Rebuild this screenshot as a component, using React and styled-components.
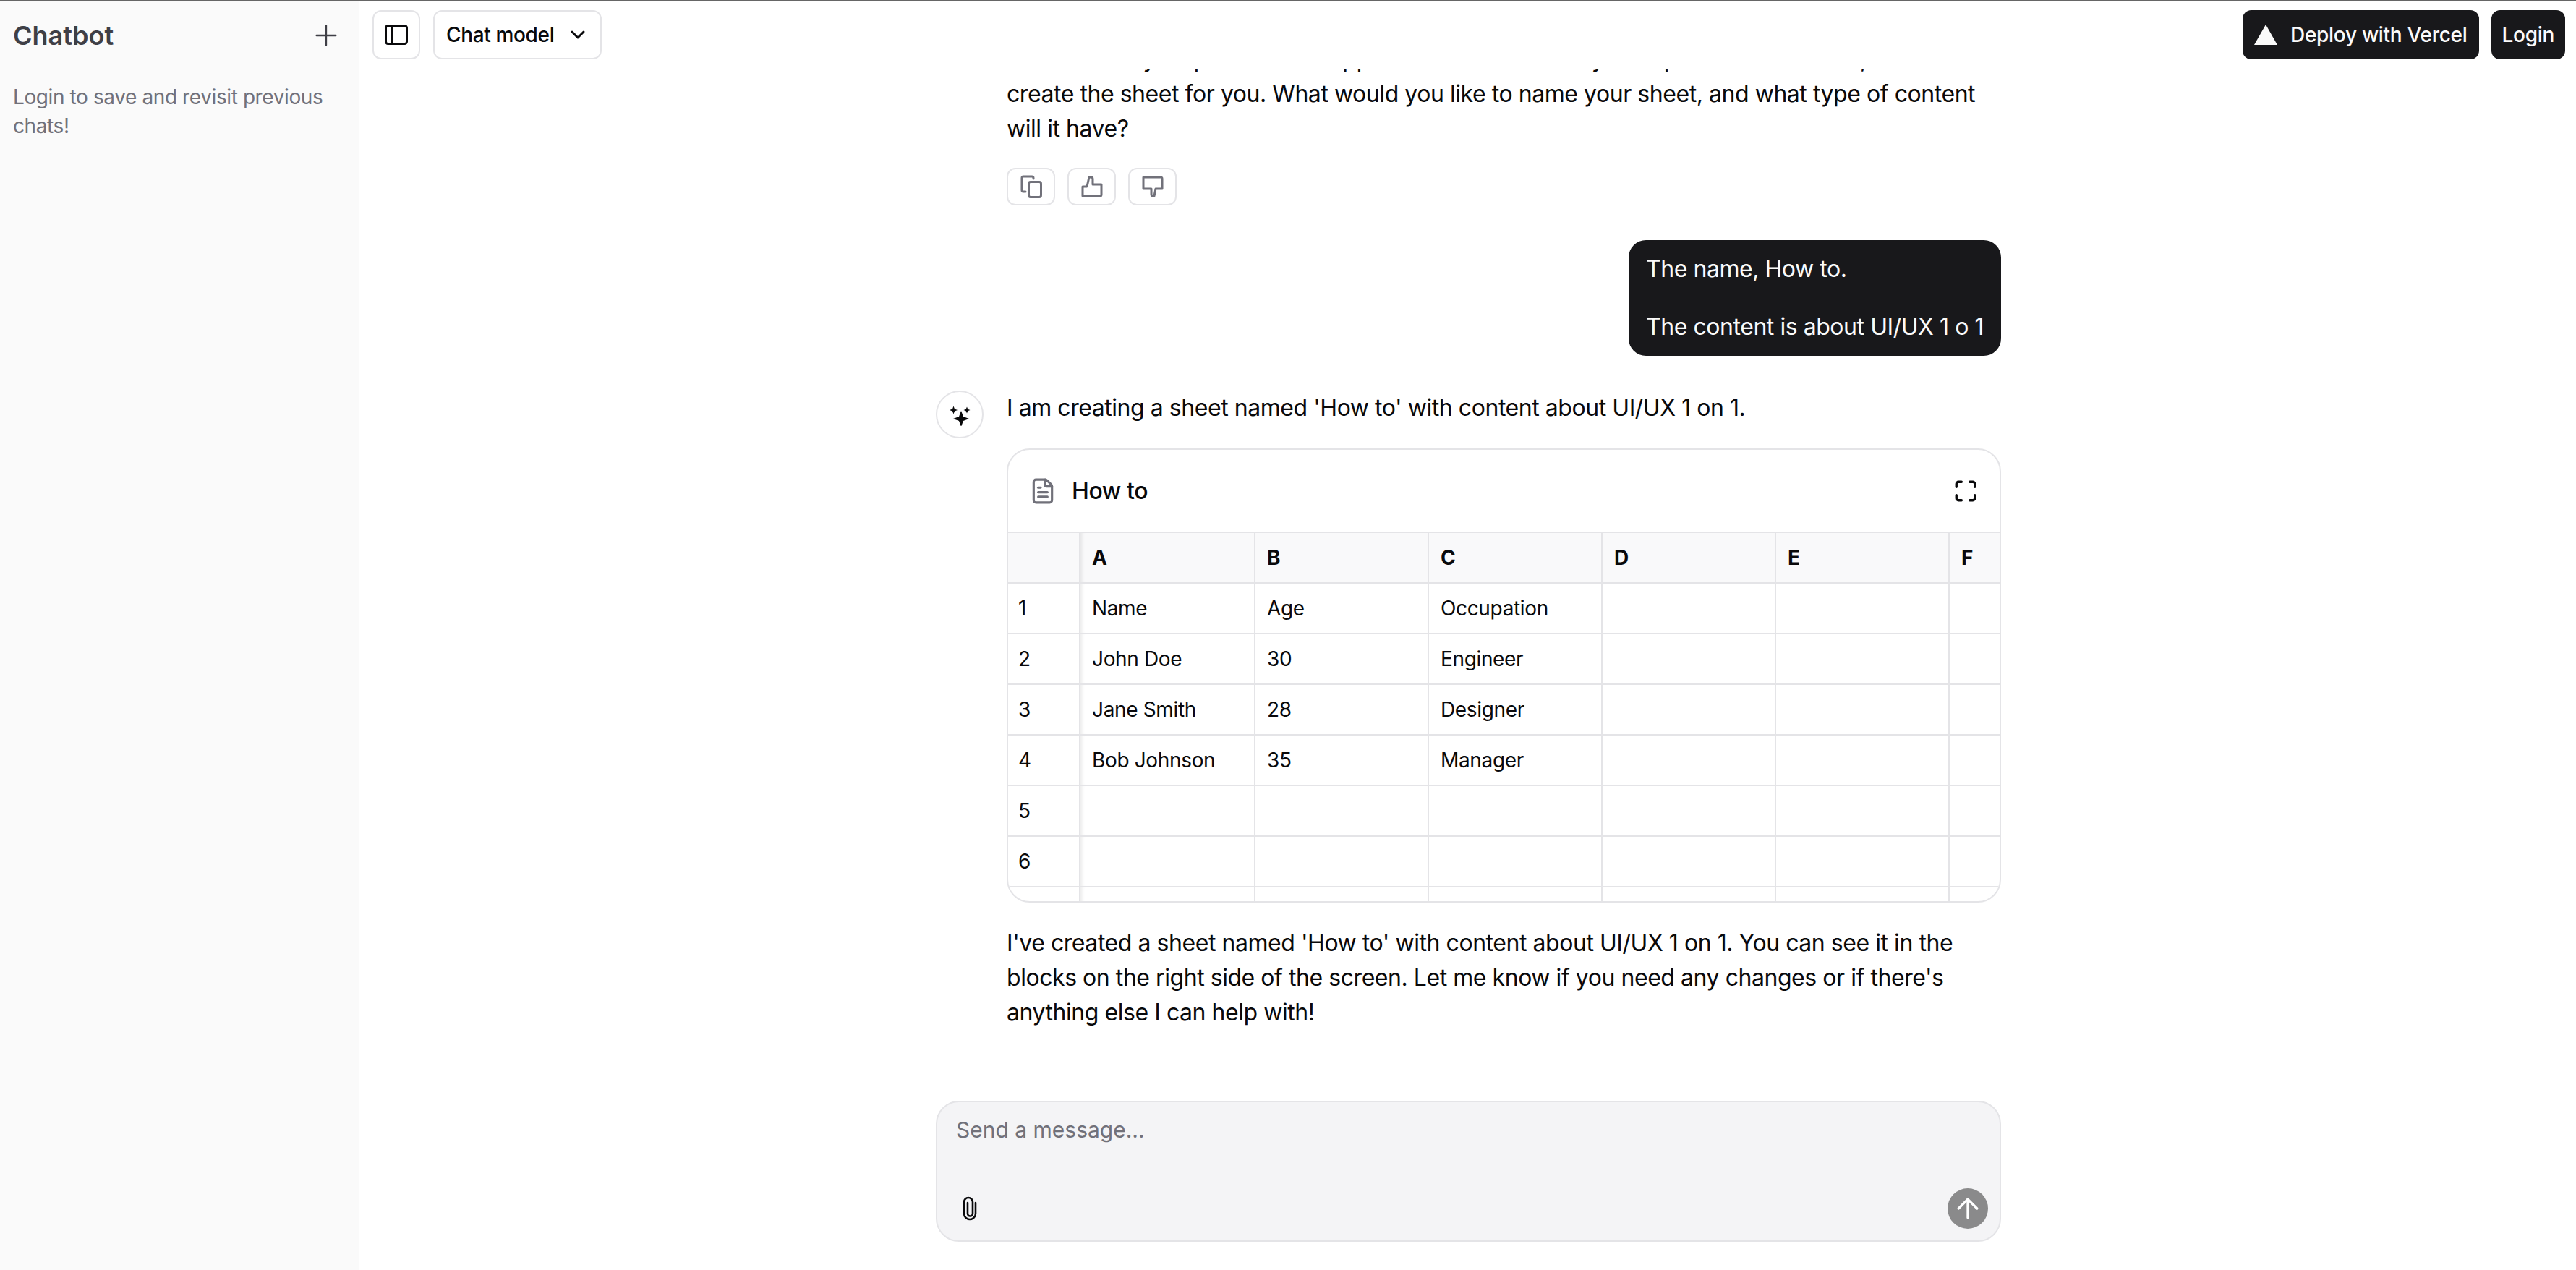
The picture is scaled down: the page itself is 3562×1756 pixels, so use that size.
import React from "react";
import styled, { createGlobalStyle } from "styled-components";
import { ArrowUp, ChevronDown, FileText, Maximize, Plus } from "lucide-react";

const GlobalStyle = createGlobalStyle`
  html, body {
    margin: 0;
    padding: 0;
    height: 100%;
    overflow: hidden;
    background: #fff;
    font-family: Inter, "Liberation Sans", sans-serif;
    color: #09090b;
  }
  #root { height: 100%; }
`;

const Page = styled.div`
  display: flex;
  height: 1756px;
  border-top: 2px solid #666;
  box-sizing: border-box;
`;

const Sidebar = styled.aside`
  width: 497px;
  flex: none;
  background: #fafafa;
  padding: 0 18px;
  box-sizing: border-box;
`;

const SidebarHead = styled.div`
  display: flex;
  justify-content: space-between;
  align-items: center;
  height: 94px;
  color: #3f3f46;
  padding-right: 5px;
`;

const Brand = styled.div`
  font-size: 36px;
  font-weight: 600;
`;

const SidebarNote = styled.p`
  margin: 18px 0 0;
  font-size: 28px;
  line-height: 40px;
  letter-spacing: -0.4px;
  color: #71717a;
`;

const Main = styled.main`
  flex: 1;
  min-width: 0;
  display: flex;
  flex-direction: column;
  height: 100%;
`;

const TopBar = styled.header`
  height: 94px;
  flex: none;
  display: flex;
  align-items: flex-start;
  padding: 12px 15px 0 18px;
  box-sizing: border-box;
  background: #fff;
`;

const OutlineButton = styled.div`
  height: 68px;
  box-sizing: border-box;
  display: flex;
  align-items: center;
  justify-content: center;
  gap: 17px;
  padding: ${(p) => (p.$icon ? "0 15px" : "0 15px 0 16px")};
  border: 2px solid #e4e4e7;
  border-radius: 12px;
  font-size: 28px;
  font-weight: 500;
  letter-spacing: -0.35px;
  margin-right: 18px;
`;

const DarkButton = styled.div`
  height: 68px;
  box-sizing: border-box;
  display: flex;
  align-items: center;
  gap: 18px;
  padding: 0 ${(p) => (p.$wide ? "16px" : "15px")};
  margin-left: ${(p) => (p.$wide ? "auto" : "17px")};
  background: #18181b;
  color: #fafafa;
  border-radius: 12px;
  font-size: 28px;
  font-weight: 500;
  letter-spacing: -0.3px;
`;

const Messages = styled.div`
  flex: 1;
  min-height: 0;
  overflow: hidden;
  display: flex;
  flex-direction: column;
  justify-content: flex-end;
  padding-left: 797px;
  width: 1473px;
  box-sizing: content-box;
`;

const Prose = styled.div`
  font-size: 32px;
  line-height: 48px;
  letter-spacing: -0.45px;
  white-space: nowrap;
  margin-top: ${(p) => p.$top || 0}px;
  margin-left: ${(p) => p.$left || 0}px;
`;

const Actions = styled.div`
  display: flex;
  gap: 17px;
  margin: 30px 0 0 98px;
`;

const ActionButton = styled.div`
  width: 67px;
  height: 52px;
  box-sizing: border-box;
  display: flex;
  align-items: center;
  justify-content: center;
  border: 2px solid #e4e4e7;
  border-radius: 12px;
  color: #71717a;
`;

const UserBubble = styled.div`
  align-self: flex-end;
  margin-top: 48px;
  background: #18181b;
  color: #fafafa;
  border-radius: 24px;
  padding: 16px 24px;
  font-size: 32px;
  line-height: 48px;
  letter-spacing: -0.45px;
  white-space: nowrap;
  p {
    margin: 0;
  }
  p + p {
    margin-top: 32px;
  }
`;

const AssistantRow = styled.div`
  display: flex;
  gap: 32px;
  margin-top: 48px;
`;

const Avatar = styled.div`
  width: 66px;
  height: 66px;
  flex: none;
  box-sizing: border-box;
  border: 2px solid #e4e4e7;
  border-radius: 50%;
  display: flex;
  align-items: center;
  justify-content: center;
`;

const AssistantBody = styled.div`
  width: 1375px;
`;

const SheetCard = styled.div`
  margin-top: 32px;
  height: 628px;
  box-sizing: border-box;
  border: 2px solid #e4e4e7;
  border-radius: 32px;
  overflow: hidden;
  background: #fff;
`;

const SheetHead = styled.div`
  height: 113px;
  box-sizing: border-box;
  display: flex;
  align-items: center;
  padding: 0 30px 0 29px;
  gap: 21px;
  font-size: 32px;
  font-weight: 500;
  letter-spacing: -0.42px;
`;

const SheetTitle = styled.span`
  flex: 1;
`;

const Grid = styled.div`
  display: grid;
  grid-template-columns: 98px 242px 240px 240px 240px 240px 1fr;
  grid-auto-rows: 70px;
`;

const Cell = styled.div`
  box-sizing: border-box;
  border-top: 2px solid #e4e4e7;
  border-left: ${(p) => (p.$first ? "none" : "2px solid #e4e4e7")};
  background: ${(p) => (p.$head ? "#f9f9fa" : "transparent")};
  box-shadow: ${(p) => (p.$shade ? "inset 6px 0 5px -4px rgba(0,0,0,0.09)" : "none")};
  display: flex;
  align-items: center;
  padding-left: ${(p) => (p.$first ? "14px" : "16px")};
  font-size: 28px;
  font-weight: ${(p) => (p.$head ? 700 : 400)};
  letter-spacing: -0.35px;
  white-space: nowrap;
  overflow: hidden;
`;

const Composer = styled.div`
  height: 195px;
  flex: none;
  box-sizing: border-box;
  margin: 98px 0 39px 797px;
  width: 1473px;
  border: 2px solid #e4e4e7;
  border-radius: 32px;
  background: #f4f4f6;
  padding: 18px 16px 16px 26px;
  display: flex;
  flex-direction: column;
  justify-content: space-between;
`;

const Placeholder = styled.div`
  font-size: 30px;
  line-height: 40px;
  color: #71717a;
`;

const ComposerTools = styled.div`
  display: flex;
  align-items: center;
  justify-content: space-between;
  padding-left: 9px;
`;

const SendButton = styled.div`
  width: 56px;
  height: 56px;
  border-radius: 50%;
  background: #8a8a8b;
  color: #fff;
  display: flex;
  align-items: center;
  justify-content: center;
`;

const SidebarIcon = () => (
  <svg width="32" height="28" viewBox="0 0 32 28" fill="none" stroke="currentColor" strokeWidth="3">
    <rect x="1.5" y="1.5" width="29" height="25" rx="3" />
    <path d="M10.5 1.5v25" />
  </svg>
);

const Sparkles = () => (
  <svg width="32" height="32" viewBox="0 0 32 32" fill="currentColor">
    <path d="M18 11 21 19 29 22 21 25 18 33 15 25 7 22 15 19Z" />
    <path d="M7.5 4.5 9 8.5 13 10 9 11.5 7.5 15.5 6 11.5 2 10 6 8.5Z" />
    <path d="M26 5.5 27.3 8.7 30.5 10 27.3 11.3 26 14.5 24.7 11.3 21.5 10 24.7 8.7Z" />
  </svg>
);

const ActionIcon = ({ children }) => (
  <svg
    width="30"
    height="32"
    viewBox="0 0 30 32"
    fill="none"
    stroke="currentColor"
    strokeWidth="3"
    strokeLinejoin="round"
    strokeLinecap="round"
  >
    {children}
  </svg>
);

const PaperclipIcon = () => (
  <svg width="20" height="34" viewBox="0 0 20 34" fill="none" stroke="currentColor" strokeWidth="2.6" strokeLinecap="round">
    <path d="M18 9V24a8 8 0 0 1-16 0V8a6 6 0 0 1 12 0V24a3.5 3.5 0 0 1-7 0V9" />
  </svg>
);

const columns = ["A", "B", "C", "D", "E", "F"];
const rows = [
  ["1", "Name", "Age", "Occupation"],
  ["2", "John Doe", "30", "Engineer"],
  ["3", "Jane Smith", "28", "Designer"],
  ["4", "Bob Johnson", "35", "Manager"],
  ["5"],
  ["6"],
  [""],
];

export default function App() {
  return (
    <>
      <GlobalStyle />
      <Page>
        <Sidebar>
          <SidebarHead>
            <Brand>Chatbot</Brand>
            <Plus size={46} strokeWidth={1.2} />
          </SidebarHead>
          <SidebarNote>Login to save and revisit previous chats!</SidebarNote>
        </Sidebar>
        <Main>
          <TopBar>
            <OutlineButton $icon>
              <SidebarIcon />
            </OutlineButton>
            <OutlineButton>
              Chat model
              <ChevronDown size={32} strokeWidth={2.25} />
            </OutlineButton>
            <DarkButton $wide>
              <svg width="32" height="28" viewBox="0 0 32 28" fill="#fafafa">
                <path d="M16 0 32 28H0Z" />
              </svg>
              Deploy with Vercel
            </DarkButton>
            <DarkButton>Login</DarkButton>
          </TopBar>
          <Messages>
            <Prose $left={98}>I can certainly help with this. Suppose the sheet needs your input and the details, then I can</Prose>
            <Prose $left={98}>create the sheet for you. What would you like to name your sheet, and what type of content</Prose>
            <Prose $left={98}>will it have?</Prose>
            <Actions>
              <ActionButton>
                <ActionIcon>
                  <rect x="11.5" y="9.5" width="17" height="21" rx="2.5" />
                  <path d="M7 23H4a2 2 0 0 1-2-2V4a2 2 0 0 1 2-2H16a2 2 0 0 1 2 2v1" />
                </ActionIcon>
              </ActionButton>
              <ActionButton>
                <ActionIcon>
                  <path d="M2 16H8L11 3H13.5A2.5 2.5 0 0 1 16 5.5V13H28V27A2 2 0 0 1 26 29H2Z" />
                </ActionIcon>
              </ActionButton>
              <ActionButton>
                <ActionIcon>
                  <path d="M2 3H26A2 2 0 0 1 28 5V19H19L17 29H15.5A2.5 2.5 0 0 1 13 26.5V19H2Z" />
                </ActionIcon>
              </ActionButton>
            </Actions>
            <UserBubble>
              <p>The name, How to.</p>
              <p>The content is about UI/UX 1 o 1</p>
            </UserBubble>
            <AssistantRow>
              <Avatar><Sparkles /></Avatar>
              <AssistantBody>
                <Prose>I am creating a sheet named 'How to' with content about UI/UX 1 on 1.</Prose>
                <SheetCard>
                  <SheetHead>
                    <FileText size={38} strokeWidth={2} color="#71717a" />
                    <SheetTitle>How to</SheetTitle>
                    <Maximize size={34} strokeWidth={2.4} />
                  </SheetHead>
                  <Grid>
                    <Cell $first $head />
                    {columns.map((c) => (
                      <Cell key={c} $head $shade={c === "A"}>{c}</Cell>
                    ))}
                    {rows.map((r, i) => (
                      <React.Fragment key={i}>
                        <Cell $first>{r[0]}</Cell>
                        {columns.map((c, j) => (
                          <Cell key={c} $shade={j === 0}>{r[j + 1]}</Cell>
                        ))}
                      </React.Fragment>
                    ))}
                  </Grid>
                </SheetCard>
                <Prose $top={32}>I've created a sheet named 'How to' with content about UI/UX 1 on 1. You can see it in the</Prose>
                <Prose>blocks on the right side of the screen. Let me know if you need any changes or if there's</Prose>
                <Prose>anything else I can help with!</Prose>
              </AssistantBody>
            </AssistantRow>
          </Messages>
          <Composer>
            <Placeholder>Send a message...</Placeholder>
            <ComposerTools>
              <PaperclipIcon />
              <SendButton><ArrowUp size={44} strokeWidth={1.8} /></SendButton>
            </ComposerTools>
          </Composer>
        </Main>
      </Page>
    </>
  );
}
